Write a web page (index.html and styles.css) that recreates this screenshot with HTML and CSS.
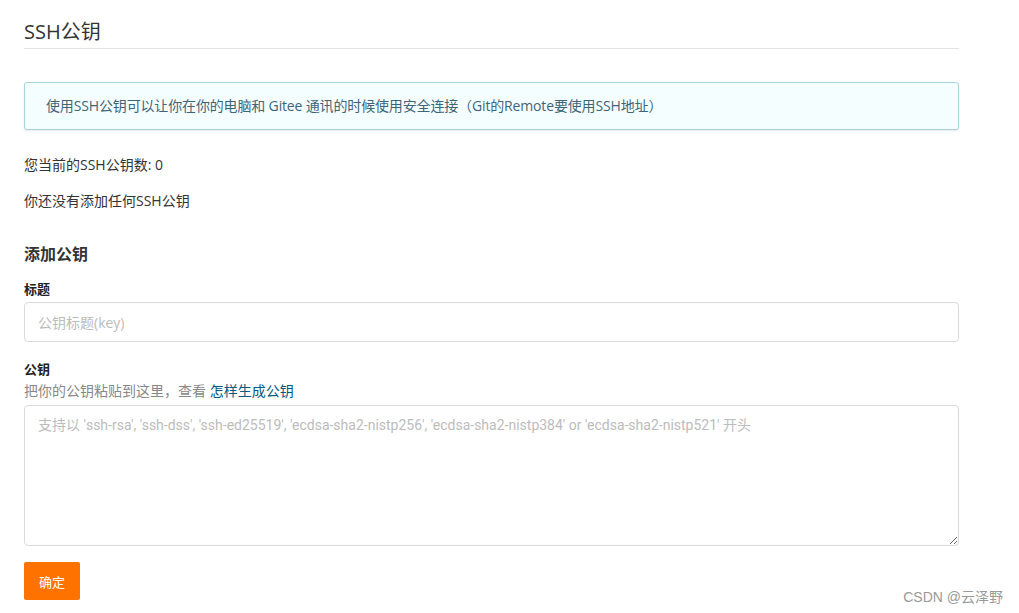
FILE: index.html
```html
<!DOCTYPE html>
<html lang="zh-CN">
<head>
<meta charset="utf-8">
<title>SSH公钥</title>
<link rel="stylesheet" href="styles.css">
</head>
<body>
<main class="page">
  <h2 class="page-title">SSH公钥</h2>
  <div class="info-box">使用SSH公钥可以让你在你的电脑和 Gitee 通讯的时候使用安全连接（Git的Remote要使用SSH地址）</div>
  <p class="count">您当前的SSH公钥数: 0</p>
  <p class="empty">你还没有添加任何SSH公钥</p>
  <h3 class="section-title">添加公钥</h3>
  <form class="key-form">
    <label class="field-label" for="key-title">标题</label>
    <input class="text-input" id="key-title" type="text" placeholder="公钥标题(key)">
    <label class="field-label field-label-key" for="key-body">公钥</label>
    <div class="field-help">把你的公钥粘贴到这里，查看 <a class="help-link" href="#">怎样生成公钥</a></div>
    <textarea class="text-area" id="key-body" placeholder="支持以 'ssh-rsa', 'ssh-dss', 'ssh-ed25519', 'ecdsa-sha2-nistp256', 'ecdsa-sha2-nistp384' or 'ecdsa-sha2-nistp521' 开头"></textarea>
    <button class="submit-btn" type="button">确定</button>
  </form>
</main>
<div class="watermark">CSDN @云泽野</div>
</body>
</html>
```
FILE: styles.css
```css
html, body {
  margin: 0;
  padding: 0;
  background: #fff;
}
body {
  font-family: "Open Sans", "Noto Sans CJK SC", sans-serif;
  font-size: 14px;
  color: #333;
  width: 1019px;
  height: 613px;
  overflow: hidden;
  position: relative;
}
.page {
  width: 935px;
  padding: 0 24px;
  display: flex;
  flex-direction: column;
}
.page-title {
  margin: 18px 0 0;
  font-size: 20px;
  font-weight: normal;
  line-height: 28px;
  padding-bottom: 2px;
  border-bottom: 1px solid #e3e3e3;
  color: #333;
}
.info-box {
  margin-top: 33px;
  padding: 12px 21px;
  line-height: 22px;
  border: 1px solid #a9d4de;
  border-radius: 3px;
  background: #f5feff;
  color: #3d6577;
  letter-spacing: -0.15px;
  box-shadow: 0 1px 2px rgba(0, 0, 0, 0.1);
}
.count {
  margin: 25px 0 0;
  line-height: 20px;
}
.empty {
  margin: 16px 0 0;
  line-height: 20px;
}
.section-title {
  margin: 32px 0 0;
  font-size: 16px;
  font-weight: bold;
  line-height: 22px;
}
.key-form {
  display: flex;
  flex-direction: column;
  align-items: flex-start;
  margin-top: 14px;
}
.field-label {
  font-weight: bold;
  font-size: 13px;
  line-height: 20px;
  color: #222;
}
.field-label-key {
  margin-top: 17px;
}
.text-input {
  margin-top: 3px;
  box-sizing: border-box;
  width: 935px;
  height: 40px;
  border: 1px solid #d9dae0;
  border-radius: 4px;
  padding: 0 13px;
  font-family: inherit;
  font-size: 14px;
  color: #333;
  outline: none;
}
.text-input::placeholder,
.text-area::placeholder {
  color: #bcbcbc;
}
.field-help {
  margin-top: 2px;
  line-height: 20px;
  color: #888;
}
.help-link {
  color: #005980;
  text-decoration: none;
}
.text-area {
  margin-top: 4px;
  box-sizing: border-box;
  width: 935px;
  height: 141px;
  border: 1px solid #d9dae0;
  border-radius: 4px;
  padding: 9px 13px;
  font-family: "Roboto", "Noto Sans CJK SC", sans-serif;
  font-size: 14px;
  line-height: 20px;
  color: #333;
  outline: none;
  resize: both;
}
.submit-btn {
  margin-top: 16px;
  width: 56px;
  height: 38px;
  border: none;
  border-radius: 2px;
  background: #fe7300;
  color: #fff;
  font-family: inherit;
  font-size: 13px;
  padding: 0;
  cursor: pointer;
}
.watermark {
  position: absolute;
  right: 16px;
  bottom: 7px;
  font-family: "Liberation Sans", "Noto Sans CJK SC", sans-serif;
  font-size: 14px;
  color: #999;
  line-height: 18px;
}
```
